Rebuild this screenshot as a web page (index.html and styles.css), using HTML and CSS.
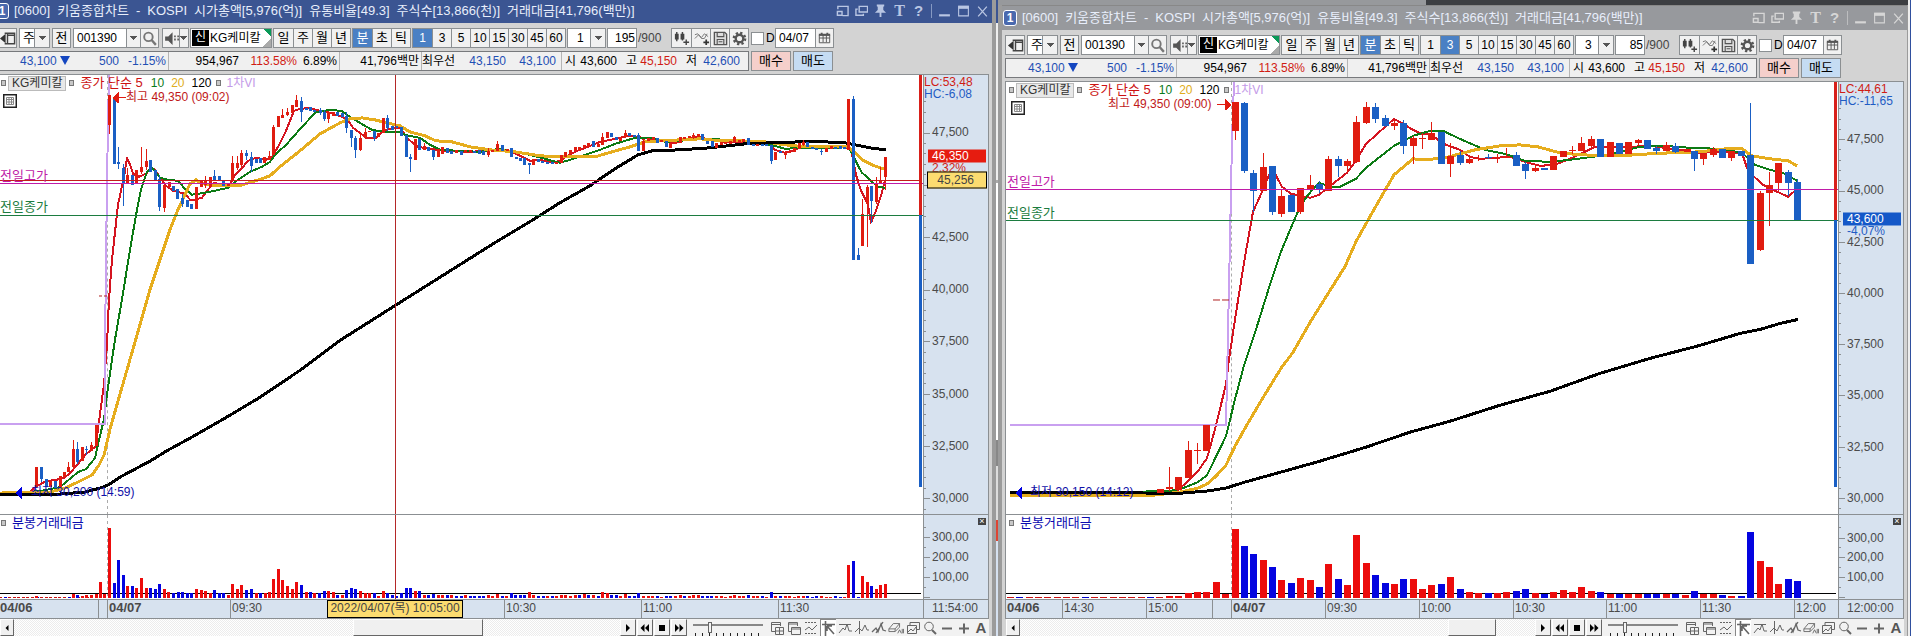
FILE: index.html
```html
<!DOCTYPE html>
<html lang="ko">
<head>
<meta charset="utf-8">
<title>키움종합차트</title>
<link rel="stylesheet" href="styles.css">
</head>
<body>
<svg class="defs" aria-hidden="true">
  <symbol id="i-restore" viewBox="0 0 14 12"><path d="M2 4V1h11v10H7M1.500 6.500h5v4h-5z" fill="none" stroke="currentColor" stroke-width="1.500"/></symbol>
  <symbol id="i-cascade" viewBox="0 0 14 12"><path d="M4.500 1h9v6h-9zM3 4H1v6.500h8V9" fill="none" stroke="currentColor" stroke-width="1.500"/></symbol>
  <symbol id="i-pin" viewBox="0 0 14 14"><path d="M3 0h8v2l-1 .5V6l3 3H8v4.500H6V9H1l3-3V2.500L3 2z" fill="currentColor"/></symbol>
  <symbol id="i-min" viewBox="0 0 12 12"><path d="M1 9h10v2H1z" fill="currentColor"/></symbol>
  <symbol id="i-max" viewBox="0 0 12 12"><path d="M1.500 2v8.500h9V2z" fill="none" stroke="currentColor"/><path d="M1 1h10v3H1z" fill="currentColor"/></symbol>
  <symbol id="i-x" viewBox="0 0 12 12"><path d="M2 2l8 9M10 2l-8 9" stroke="currentColor" stroke-width="1.200"/></symbol>
  <symbol id="i-panel" viewBox="0 0 18 18"><path d="M6 3.500h10.500v11H6M9 3.500v11M9 5.500h7" fill="none" stroke="#444" stroke-width="1.500"/><path d="M1 9l6-5v10z" fill="#333"/></symbol>
  <symbol id="i-search" viewBox="0 0 16 16"><circle cx="7" cy="6.500" r="4" fill="none" stroke="#777" stroke-width="1.800"/><path d="M10 9.500l4 4.500" stroke="#777" stroke-width="2.200"/></symbol>
  <symbol id="i-sound" viewBox="0 0 16 16"><path d="M2 6h3l4-4v12L5 10H2z" fill="#555"/><path d="M10.500 6h1.500M13.500 6H15M10.500 9h1.500M13.500 9H15" stroke="#555" stroke-width="1.800"/></symbol>
  <symbol id="i-candle" viewBox="0 0 18 18"><path d="M2 4h4v6H2zM8 4h4v6H8z" fill="#444"/><path d="M4 2v10M10 2v9M11 13h6M14 10v6" stroke="#444" stroke-width="1.500"/></symbol>
  <symbol id="i-wave" viewBox="0 0 18 18"><path d="M2 9l4-4 3 3 3-4 4 3M2 5l3-1 4 5 3 0 3-5" fill="none" stroke="#777"/><path d="M11 13h6M14 10v6" stroke="#333" stroke-width="1.800"/></symbol>
  <symbol id="i-save" viewBox="0 0 18 18"><path d="M2.500 2.500h11l2 2v11h-13z" fill="#ddd" stroke="#555" stroke-width="1.400"/><path d="M5.500 3v4h7V3M5.500 15v-5h7v5M7 12.500h4" fill="none" stroke="#555" stroke-width="1.200"/></symbol>
  <symbol id="i-gear" viewBox="0 0 18 18"><circle cx="9" cy="9" r="6" fill="none" stroke="#555" stroke-width="2.500" stroke-dasharray="2.400 2.310"/><circle cx="9" cy="9" r="4" fill="none" stroke="#555" stroke-width="2.500"/></symbol>
  <symbol id="i-cal" viewBox="0 0 18 18"><path d="M3.500 5.500h11v8h-11zM3.500 8.500h11M7.500 5v8M11 5v8" fill="none" stroke="#555"/><path d="M3 4h12v2H3zM5 3h2v2H5zM11 3h2v2h-2z" fill="#555"/></symbol>
  <symbol id="i-grid" viewBox="0 0 14 14"><rect x=".75" y=".75" width="12.500" height="12.500" fill="#fff" stroke="#222" stroke-width="1.500"/><path d="M3.500 3.500h7v7h-7zM3.500 5.500h7M3.500 8h7M6 3.500v7M8.500 3.500v7" fill="none" stroke="#888"/></symbol>
  <symbol id="i-play" viewBox="0 0 16 16"><path d="M6 4l4 4-4 4z"/></symbol>
  <symbol id="i-prev" viewBox="0 0 16 16"><path d="M7.500 4v8l-4-4zM12 4v8L8 8z"/></symbol>
  <symbol id="i-next" viewBox="0 0 16 16"><path d="M4 4v8l4-4zM8.500 4v8l4-4z"/></symbol>
  <symbol id="i-stop" viewBox="0 0 16 16"><path d="M5 5h6v6H5z"/></symbol>
  <symbol id="i-left" viewBox="0 0 16 16"><path d="M10 4v8L6 8z"/></symbol>
  <symbol id="t-addwin" viewBox="0 0 16 16"><path d="M6 11.500H2.500v-9h9V6M2.500 4.500h9M6.500 7.500h8v7h-8zM10.500 7.500v7M6.500 11h8"/></symbol>
  <symbol id="t-wins" viewBox="0 0 16 16"><path d="M5 11.500H2.500v-9h9V6M2.500 4h9M5.500 7.500h9v7h-9zM5.500 9h9"/></symbol>
  <symbol id="t-range" viewBox="0 0 16 16"><path d="M2 2.500h12M2 13.500h12" stroke-dasharray="2 1"/><path d="M2 10l4-3 3 3 5-5"/></symbol>
  <symbol id="t-cursor" viewBox="0 0 16 16"><path d="M2 4.500h13M5.500 1v15M7 6l7 8M7 6v5M7 6h5" stroke-width="1.600"/></symbol>
  <symbol id="t-peak" viewBox="0 0 16 16"><path d="M2 4.500h12M2 13l4-5 2 2 2-6 2 7h3"/></symbol>
  <symbol id="t-vert" viewBox="0 0 16 16"><path d="M5.500 1v13M1 12l4-4 3 3 3-6 2 5 2 0"/></symbol>
  <symbol id="t-trend" viewBox="0 0 16 16"><path d="M1 12l4-4 2 4 3-8 2 6 3 1M5 13L12 2" stroke-width="1.300"/></symbol>
  <symbol id="t-erase" viewBox="0 0 18 16"><path d="M1 9l5-6h7l-5 6zM1 9v3h7V9M8 12l5-5V3M11 14l2-4 2 4M16 9v5M17.500 9v5"/></symbol>
  <symbol id="t-copy" viewBox="0 0 16 16"><path d="M5 5V2.500h9.500v7H12M2.500 5.500h9v8h-9zM3 12l3-3 2 2 3-4"/></symbol>
  <symbol id="t-zoom" viewBox="0 0 16 16"><circle cx="7" cy="6.500" r="4.300"/><path d="M10 10l4 4" stroke-width="2"/></symbol>
  <symbol id="t-minus" viewBox="0 0 16 16"><path d="M3 8.500h10" stroke-width="2"/></symbol>
  <symbol id="t-plus" viewBox="0 0 16 16"><path d="M3 8.500h10M8 3.500v10" stroke-width="2"/></symbol>
</svg>

<main class="desktop">
  <div class="pane pane-left" id="left"></div>
  <div class="seam"></div>
  <div class="pane pane-right" id="right"></div>
  <div class="edge"></div>
</main>

<template id="window">
  <section class="window">
    <header class="titlebar">
      <b class="badge">1</b>
      <h1 class="title"><span>[0600]</span><span>키움종합차트</span><span>-</span><span>KOSPI</span><span>시가총액[5,976(억)]</span><span>유통비율[49.3]</span><span>주식수[13,866(천)]</span><span>거래대금[41,796(백만)]</span></h1>
      <div class="caption">
        <button aria-label="복원"><svg><use href="#i-restore"/></svg></button>
        <button aria-label="겹치기"><svg><use href="#i-cascade"/></svg></button>
        <button aria-label="고정"><svg><use href="#i-pin"/></svg></button>
        <button class="serif">T</button>
        <button class="help">?</button>
        <i class="bar"></i>
        <button aria-label="최소화"><svg><use href="#i-min"/></svg></button>
        <button aria-label="최대화"><svg><use href="#i-max"/></svg></button>
        <button aria-label="닫기"><svg><use href="#i-x"/></svg></button>
      </div>
    </header>
    <div class="toolbar">
      <button class="btn sq" aria-label="패널"><svg><use href="#i-panel"/></svg></button>
      <label class="combo kind"><select aria-label="종류"><option>주</option></select></label>
      <button class="btn">전</button>
      <div class="group code"><input value="001390" aria-label="종목코드"><button class="drop" aria-label="목록"></button><button aria-label="검색"><svg><use href="#i-search"/></svg></button></div>
      <div class="group sound"><button aria-label="소리"><svg><use href="#i-sound"/></svg></button><button class="drop" aria-label="소리 설정"></button></div>
      <div class="stock"><b>신</b><span>KG케미칼</span></div>
      <div class="group cells"><button>일</button><button>주</button><button>월</button><button>년</button></div>
      <div class="group cells"><button class="on">분</button><button>초</button><button>틱</button></div>
      <div class="group cells minutes"><button>1</button><button>3</button><button>5</button><button>10</button><button>15</button><button>30</button><button>45</button><button>60</button></div>
      <label class="combo step"><select aria-label="분 단위"><option></option></select></label>
      <input class="count" aria-label="봉 개수"><span class="total">/900</span>
      <div class="group cells tools"><button aria-label="봉 추가"><svg><use href="#i-candle"/></svg></button><button aria-label="지표 추가"><svg><use href="#i-wave"/></svg></button><button aria-label="저장"><svg><use href="#i-save"/></svg></button><button aria-label="설정"><svg><use href="#i-gear"/></svg></button></div>
      <label class="day"><input type="checkbox">D</label>
      <div class="group date"><input value="04/07" aria-label="날짜"><button aria-label="달력"><svg><use href="#i-cal"/></svg></button></div>
    </div>
    <div class="quote">
      <div class="figures">
        <span class="dn">43,100 <i class="tri"></i></span><span class="dn">500</span><span class="dn end">-1.15%</span>
        <span>954,967</span><span class="up">113.58%</span><span class="end">6.89%</span>
        <span class="end">41,796백만</span>
        <span class="word">최우선</span><span class="dn">43,150</span><span class="dn end last">43,100</span>
        <span class="word">시</span><span>43,600</span><span class="word">고</span><span class="up">45,150</span><span class="word">저</span><span class="dn">42,600</span>
      </div>
      <button class="buy">매수</button><button class="sell">매도</button>
    </div>
    <div class="chart">
      <div class="plot price">
        <svg class="canvas" preserveAspectRatio="none"></svg>
        <div class="legend"><i class="knob"></i><span class="name">KG케미칼</span><i class="knob"></i><span class="ma5">종가 단순 5</span><span class="ma10">10</span><span class="ma20">20</span><span class="ma120">120</span><i class="knob"></i><span class="vi">1차VI</span></div>
        <button class="gridbtn" aria-label="표"><svg><use href="#i-grid"/></svg></button>
      </div>
      <div class="axis price-axis"><svg class="ticks" preserveAspectRatio="none"></svg><p class="lc"></p><p class="hc"></p></div>
      <div class="plot volume">
        <svg class="canvas" preserveAspectRatio="none"></svg>
        <div class="legend"><i class="knob"></i><span class="vol">분봉거래대금</span></div>
      </div>
      <div class="axis volume-axis"><svg class="ticks" preserveAspectRatio="none"></svg><button class="close" aria-label="닫기">×</button></div>
      <div class="times"></div>
      <div class="axis clock"></div>
    </div>
    <footer class="bottom">
      <div class="scroll"><button class="raised" aria-label="왼쪽"><svg><use href="#i-left"/></svg></button><i class="before"></i><i class="thumb raised"></i><i class="after"></i></div>
      <div class="nav"><button class="raised" aria-label="재생"><svg><use href="#i-play"/></svg></button><button class="raised" aria-label="뒤로"><svg><use href="#i-prev"/></svg></button><button class="raised" aria-label="정지"><svg><use href="#i-stop"/></svg></button><button class="raised" aria-label="앞으로"><svg><use href="#i-next"/></svg></button></div>
      <div class="speed"><input type="range" min="0" max="9" value="2" aria-label="속도"></div>
      <div class="draw"></div>
    </footer>
  </section>
</template>
<script src="app.js"></script>
</body>
</html>
```
FILE: styles.css
```css
:root {
  --ui: "Liberation Sans", "Noto Sans CJK KR", sans-serif;
  --line: #8b8f92;
  --up: #d01c14;
  --down: #1f4fb4;
}
* { box-sizing: border-box; }
body { margin: 0; height: 100vh; overflow: hidden; background: #fff; font: 12px/14px var(--ui); color: #000; }
button, input, select { font: inherit; color: inherit; margin: 0; padding: 0; border: 0; border-radius: 0; background: none; }
i { font-style: normal; }
p { margin: 0; }
.defs { position: absolute; width: 0; height: 0; }

.desktop { display: flex; height: 100vh; }
.pane { min-width: 0; display: flex; }
.pane-left { flex: 996 1 0; }
.pane-right { flex: 910 1 0; padding-top: 5px; background: linear-gradient(90deg, #97999c 47%, #3c3e42 47%); }
.seam { flex: 0 0 2px; background: linear-gradient(#3c5592 0 23px, #eee 23px 180px, #aaa 180px 183px, #fff 183px 440px, #888 440px 466px, #dcdcdc 466px 520px, #d43 520px 541px, #d6e1f0 541px); }
.edge { flex: 0 0 3px; border-right: 1px solid #2f4f9e; background: #eee; }

.window { flex: 1; min-width: 0; display: flex; flex-direction: column; overflow: hidden; background: #d3d3d3; border-right: 4px solid #9b9b9b; }
.pane-right .window { border-right: 1px solid #9b9b9b; border-left: 4px solid #9b9b9b; }

.titlebar { flex: none; height: 23px; display: flex; align-items: center; gap: 5px; color: #e8eefb; background: #3b5592; margin-right: -4px; padding-right: 7px; }
.pane-right .titlebar { height: 25px; background: #97999d; margin: 0 -1px 0 -4px; padding: 0 3px 0 5px; border-top: 1px solid #888; }
.pane-left .titlebar { margin-left: -5px; padding-bottom: 2px; }
.badge { width: 14px; height: 16px; border: 1px solid #fff; border-radius: 3px; background: #4a69ae; text-align: center; font-size: 12px; line-height: 14px; color: #fff; }
.title { margin: 0; display: flex; gap: 7px; font: 400 13px/18px var(--ui); white-space: nowrap; }
.caption { margin-left: auto; display: flex; align-items: center; gap: 6px; color: #b9c6e3; }
.pane-right .caption { color: #d6d6d6; }
.caption button { width: 13px; height: 14px; }
.caption svg { display: block; width: 13px; height: 14px; }
.caption .serif { font: 700 16px/14px "Liberation Serif", serif; }
.caption .help { font: 700 15px/14px var(--ui); }
.bar { width: 1px; height: 14px; background: currentColor; opacity: .6; }

.toolbar { flex: none; display: flex; align-items: center; height: 20px; margin: 5px 0 3px; white-space: nowrap; }
.pane-left .toolbar, .pane-left .quote { margin-left: -3px; }
.pane-right .toolbar, .pane-right .quote { margin-left: 3px; }
.toolbar > * { flex: none; height: 20px; }
.toolbar svg { display: block; width: 17px; height: 17px; margin: auto; }
.btn, .group, .combo, .stock, .count { border: 1px solid var(--line); background: #f1f1f1; }
.btn { width: 19px; margin-right: 2px; font-size: 13px; }
.btn.sq { width: 20px; }
.group { display: flex; margin-right: 1px; }
.group button { min-width: 0; border-left: 1px solid var(--line); }
.group button:first-child { border-left: 0; }
.group input { min-width: 0; background: #fff; padding-left: 3px; }
.combo { position: relative; display: block; margin-right: 2px; background: #fff; }
.combo select { appearance: none; width: 100%; height: 18px; padding-left: 3px; font: 13px/16px var(--ui); }
.combo.kind { width: 31px; }
.combo.step { width: 39px; margin-right: 1px; }
.combo.step select { padding-left: 9px; font-size: 12px; }
.combo::after { content: ""; position: absolute; right: 0; top: 0; width: 14px; height: 18px; border-left: 1px solid var(--line); pointer-events: none; }
.combo::after, .group .drop { background: linear-gradient(#555, #555) 50% 7px / 7px 1px no-repeat, linear-gradient(#555, #555) 50% 8px / 5px 1px no-repeat, linear-gradient(#555, #555) 50% 9px / 3px 1px no-repeat, linear-gradient(#555, #555) 50% 10px / 1px 1px no-repeat, #f1f1f1; }
.code { width: 86px; margin-right: 3px; }
.code input { flex: 1; width: 54px; }
.code .drop { width: 14px; }
.sound { width: 27px; }
.sound .drop { width: 10px; }
.stock { width: 82px; margin-right: 1px; display: flex; align-items: center; background: linear-gradient(45deg, transparent 50%, #0a9a58 50%) 100% 0 / 8px 8px no-repeat, linear-gradient(135deg, transparent 50%, #aaa 50%) 100% 100% / 8px 8px no-repeat, #fff; }
.stock b { width: 17px; height: 16px; margin: 0 1px; background: #000; color: #fff; font-weight: 400; text-align: center; line-height: 15px; }
.cells button { width: 19px; font-size: 13px; }
.minutes button { font-size: 12px; }
.cells .on { background: #4a80c4; color: #fff; }
.count { width: 30px; background: #fff; text-align: right; padding-right: 1px; }
.total { width: 34px; padding-left: 1px; line-height: 20px; color: #444; }
.tools { margin-right: 2px; }
.day { display: flex; align-items: center; gap: 2px; width: 24px; }
.day input { appearance: none; width: 13px; height: 13px; border: 1px solid var(--line); background: #fff; }
.date { width: 59px; }
.date input { width: 39px; }
.date button { flex: 1; }

.quote { flex: none; display: flex; gap: 2px; height: 20px; margin-bottom: 3px; white-space: nowrap; }
.figures { display: grid; grid-template-columns: 72px 49px 50px 70px 58px 43px 82px 30px 54px 56px 14px 41px 20px 40px 20px 51px; border: 1px solid #77797c; background: #f0f0f0; text-align: right; line-height: 18px; }
.figures .dn { color: var(--down); }
.figures .up { color: var(--up); }
.figures .end { border-right: 1px solid #b5b5b5; padding-right: 2px; }
.figures .last { padding-right: 5px; }
.figures > :last-child { padding-right: 8px; }
.tri { display: inline-block; border: 5px solid transparent; border-top: 9px solid #1446c0; border-bottom: 0; }
.quote button { width: 40px; border: 1px solid var(--line); font-size: 13px; }
.buy { background: #f5cfcb; }
.sell { background: #c5dcf3; }

.chart { flex: 1; min-height: 0; display: grid; grid-template: minmax(0, 1fr) 85px 18px / minmax(0, 1fr) 65px; border: 1px solid var(--line); margin-right: 3px; background: #fff; }
.pane-left .chart { border-left: 0; }
.pane-right .chart { margin-left: 3px; }
.plot, .axis, .times { position: relative; overflow: hidden; }
.axis { background: #d7e2ef; border-left: 1px solid var(--line); color: #4a4a4a; }
.price, .price-axis, .volume, .volume-axis { border-bottom: 1px solid var(--line); }
.canvas, .ticks { position: absolute; inset: 0; width: 100%; height: 100%; shape-rendering: crispEdges; }
.legend { position: relative; display: flex; align-items: center; height: 14px; margin: 1px 0 0; padding-left: 1px; font: 13px/14px var(--ui); white-space: nowrap; }
.pane-right .legend { padding-left: 3px; }
.knob { width: 5px; height: 6px; border: 1px solid #777; background: #c8c8c8; }
.name { margin: 0 3px 0 2px; padding: 0 3px; background: #e8e8e8; border: 1px solid #bbb; font-size: 12px; line-height: 13px; color: #333; }
.ma5 { margin-left: 6px; color: #cc1111; }
.ma10 { margin-left: 8px; color: #0a7a1a; }
.ma20 { margin-left: 7px; color: #e0ad20; }
.ma120 { margin: 0 4px 0 7px; }
.ma10, .ma20, .ma120, .vi { font-size: 12px; }
.vi { margin-left: 6px; color: #c39ae8; }
.vol { margin-left: 6px; color: #0a0ab0; }
.gridbtn { position: relative; display: block; width: 14px; height: 14px; margin: 4px 0 0 3px; }
.pane-right .gridbtn { margin-left: 5px; }
.gridbtn svg { display: block; width: 14px; height: 14px; }
.note { position: absolute; transform: translateY(-50%); line-height: 14px; white-space: nowrap; }
.note.level { font-size: 13px; }
.axis .label { position: absolute; left: 8px; transform: translateY(-50%); }
.lc { position: relative; color: var(--up); line-height: 14px; }
.hc { position: relative; color: #1f5cc4; line-height: 12px; margin-top: -1px; }
.tag { position: absolute; left: 4px; width: 58px; height: 13px; padding-left: 4px; transform: translateY(-50%); color: #fff; line-height: 13px; }
.rate { position: absolute; left: 8px; transform: translateY(-50%); line-height: 11px; }
.cross { position: absolute; border: 1px solid #000; background: #fcdc70; color: #444; white-space: nowrap; }
.axis .cross { left: 3px; width: 60px; height: 17px; padding-right: 12px; transform: translateY(-50%); text-align: right; line-height: 14px; }
.close { position: absolute; right: 2px; top: 3px; width: 8px; height: 7px; background: #444; color: #fff; font-size: 9px; line-height: 7px; }
.times { background: #d7e2ef; color: #4a4a4a; line-height: 16px; }
.times span { position: absolute; top: 0; height: 18px; padding-left: 1px; border-left: 1px solid var(--line); }
.times .bold { font-size: 13px; font-weight: 700; }
.times .first { border: 0; padding: 0; }
.times .cross { padding: 0; text-align: center; border: 1px solid #000; line-height: 15px; }
.clock { padding-left: 8px; line-height: 16px; }

.bottom { flex: none; height: 17px; display: flex; background: #f2f2f2; overflow: hidden; }
.pane-right .bottom { margin-left: 4px; }
.pane-right .bottom, .pane-left .bottom { margin-right: 3px; }
.raised { background: #f0f0f0; border: 1px solid #fff; border-right: 1px solid #666; border-bottom: 1px solid #666; }
.bottom svg { display: block; width: 16px; height: 16px; }
.scroll { flex: 1; display: flex; background: repeating-conic-gradient(#ececec 0 25%, #fff 0 50%) 0 0 / 2px 2px; }
.scroll button { width: 14px; display: flex; justify-content: center; }
.scroll i { display: block; }
.nav { display: flex; gap: 1px; }
.nav button { width: 16px; }
.nav svg { margin-left: -1px; }
.speed { width: 82px; padding: 3px 6px 0; }
.speed input { appearance: none; display: block; width: 70px; height: 14px; background: linear-gradient(#888, #888) 0 2px / 100% 2px no-repeat, repeating-linear-gradient(90deg, #222 0 1px, transparent 1px 7px) 2px 11px / 100% 3px no-repeat; }
.speed input::-webkit-slider-thumb { appearance: none; width: 4px; height: 11px; margin-top: -3px; background: #f4f4f4; border: 1px solid #666; }
.draw { display: flex; gap: 1px; }
.draw button { width: 16px; height: 17px; }
.draw svg { fill: none; stroke: #666; }
.draw .on { background: #fff; box-shadow: inset 1px 1px #888; }
.draw .letter { font: 700 15px/16px var(--ui); color: #555; }
```
FILE: app.js
```js
const RED = '#e01c10', BLUE = '#1a5fc4';

// Each candle: x, kind (r/b), body top, body bottom, wick top, wick bottom.
const LEFT = {
  side: 'left', minute: 0, step: '1', count: '195',
  width: 923, top: 75, bottom: 515, bodyWidth: 3,
  lc: 'LC:53,48', hc: 'HC:-6,08',
  scale: { y0: 499.3, per: 52.4 },
  candles: `36 r 468 487;41 b 468 480 468 483;46 b 480 488;50 r 482 488;55 b 482 489;60 r 477 488;64 r 473 478;68 r 468 473 463 473;73 r 450 468 441 470;77 b 450 463 443 465;82 r 448 462;86 b 450 451 447 456;91 r 446 452 443 452;96 r 426 447;109 r 95 125 95 134;114 b 97 164;118 b 162 164 147 169;123 b 168 184 164 206;127 r 175 184 168 184;132 b 175 185;136 r 170 184;141 r 167 172 147 174;146 r 161 167 149 170;150 b 160 172;155 b 170 180;159 b 179 207 175 211;164 r 185 208 185 212;169 r 182 187;173 b 186 191;177 b 189 199;182 b 198 204 194 207;187 b 200 207;191 b 204 209;196 r 187 209;201 r 181 187;205 r 180 185 176 188;210 r 177 187;214 b 176 180 170 181;219 b 176 180;223 b 181 186;228 r 183 186;232 r 163 180 156 182;237 r 163 168 156 170;241 r 153 165 150 168;246 b 153 156 150 160;251 b 157 166 152 172;256 b 159 163;260 b 158 163;264 r 157 163;269 r 156 160 151 160;273 r 127 155 125 155;278 r 116 127;282 r 115 118 109 118;287 r 112 115 108 116;292 r 105 113;296 r 100 107 95 107;301 b 101 112 97 122;306 b 108 110;310 b 107 111;314 b 110 112;320 b 110 113 108 115;324 b 112 119 110 121;328 r 112 119 111 123;333 r 112 116;337 b 112 116;342 b 113 117;346 b 116 128 112 133;351 b 130 138 130 147;355 b 138 150 136 158;360 r 138 150 133 151;365 r 132 138 128 138;369 r 131 132;374 b 131 138 131 141;378 r 133 137;383 r 118 133;387 b 118 128 115 131;392 b 126 130;396 b 126 128;401 b 127 136;406 b 135 157;410 b 157 159 154 172;415 r 139 160;419 b 139 150;424 r 146 150 143 150;428 b 147 151;433 b 150 157 150 160;438 r 149 157;442 r 147 154;447 b 148 153;451 b 151 154;456 r 150 153;461 b 151 155;465 r 150 153;470 r 150 152;474 b 151 153;479 b 150 154;483 b 151 155;488 r 151 155 148 157;492 r 150 152;497 r 144 151 141 151;502 b 145 151;507 r 149 151;511 b 148 157;516 b 157 159;520 b 158 161;524 b 158 165;529 b 163 165 163 174;533 r 159 165;538 b 159 162;542 b 161 163;547 b 162 164;552 b 162 164;556 r 162 164;561 r 155 163;565 r 152 157;570 r 150 154;575 r 147 151;579 r 147 150;584 r 145 148;588 r 143 147;593 b 141 147;598 r 144 147;602 r 137 145 133 145;607 r 132 138;611 b 133 137;616 b 137 140;620 r 137 141;625 r 133 137 130 138;629 b 133 136;634 b 135 137;638 b 135 151 133 151;643 r 141 151;648 r 138 141;653 r 137 140;657 b 138 143;661 r 140 142;666 b 141 147;670 r 143 148;675 r 142 144;680 r 137 143;684 r 137 139;689 r 136 138;693 r 135 138 133 139;698 r 134 137;702 b 134 140;707 b 141 144;712 b 141 147;716 r 143 148;721 r 142 145;725 r 142 144;730 r 141 144;734 r 137 142 136 142;739 r 140 142;743 r 139 142;748 b 138 145;753 b 144 146;757 r 144 146;762 b 144 146;766 b 144 146;771 b 145 161 145 164;775 r 152 160;780 b 151 153;785 r 153 155 151 159;789 r 151 153;794 r 148 152;799 r 143 149;803 r 142 145 140 146;807 b 142 147;812 b 147 149;816 b 148 150;821 b 151 152 149 155;826 r 148 152;831 r 146 149;835 b 147 149;840 b 146 149;844 b 147 149;848 r 99 150;853 b 99 260 96 260;858 b 255 260 248 260;862 r 214 246 199 246;867 r 187 204 185 247;871 b 186 201 186 223;876 r 184 202 177 204;880 r 180 184 167 184;885 r 157 177 157 190`,
  lines: [
    ['#d41420', 2, '28,494 37,487 46,482 55,481 64,479 70,474 77,466 86,455 96,447 98,430 104,385 107,345 109,300 112,260 118,205 124,177 127,158 130,165 133,174 139,177 146,174 151,168 155,170 160,178 166,186 173,191 185,194 190,200 195,200 202,198 208,190 214,183 222,185 230,184 236,174 243,167 248,161 256,158 266,160 272,157 278,147 286,131 294,111 300,109 310,108 320,111 330,113 340,116 348,120 353,128 360,133 366,138 376,138 382,132 390,129 400,128 409,140 418,147 430,149 445,151 470,152 500,150 510,151 520,156 530,161 540,160 552,163 560,161 566,157 577,151 588,147 600,142 615,139 628,136 640,137 645,141 655,139 665,142 675,143 690,138 700,137 712,141 725,142 740,142 755,143 768,143 775,150 785,153 795,150 805,146 818,147 835,148 845,147 851,150 856,175 861,191 865,199 868,205 871,223 876,211 881,196 885,180'],
    ['#0c7a14', 2, '0,495 40,492 60,488 66,483 78,473 86,470 95,459 98,445 104,420 107,395 115,340 122,300 130,250 137,210 141,190 147,172 152,168 160,178 168,180 178,181 184,188 192,195 205,193 215,191 228,188 238,180 250,172 262,167 270,162 276,154 286,145 294,136 302,127 316,112 330,110 342,111 350,117 360,123 372,130 385,132 400,132 405,135 420,138 430,145 440,150 460,151 480,152 500,149 515,152 530,155 545,159 560,163 570,160 585,155 600,150 615,144 635,138 650,138 665,142 680,141 700,139 730,140 745,141 760,144 775,146 785,149 800,148 835,148 848,147 853,155 858,166 862,173 868,178 873,183 878,187 885,188'],
    ['#e6ad1e', 3, '0,494 50,493 65,489 80,482 92,476 99,466 104,456 110,430 118,402 130,360 140,325 150,290 160,260 170,230 178,210 184,197 190,184 196,180 202,184 215,186 240,186 252,182 262,179 270,176 280,167 300,151 320,134 340,123 350,119 362,118 375,120 400,126 410,132 425,136 436,141 452,142 470,147 490,150 515,152 540,156 560,157 595,157 612,152 630,147 645,142 660,141 680,140 700,139 720,141 740,141 765,142 785,145 805,147 848,147 855,153 862,160 872,165 880,168 885,169'],
    ['#000', 3, '0,495 60,495 85,493 100,489 108,486 120,478 150,462 168,451 190,439 230,416 260,398 300,371 340,341 370,322 400,303 430,284 468,260 495,243 530,222 560,203 590,186 615,169 638,155 652,151 680,150 710,148 745,144 770,143 800,142 825,142 845,143 855,145 870,148 886,150'],
    ['#c9a0f0', 2, '0,425 105,425 105,345 106,265 107,180 109,75']
  ],
  levels: [['#c01ca8', 183, '전일고가', 176], ['#1c7c40', 215, '전일종가', 207]],
  dash: [99, 107, 296], divider: 107,
  high: { text: '최고 49,350 (09:02)', x: 126, y: 97, path: 'M112 98l7-6v12zM118 97.500h8v1h-8z' },
  low: { text: '최저 30,200 (14:59)', x: 31, y: 493, path: 'M15 494l7-6v12z' },
  edge: [919, 215], cross: { x: 395, y: 180 },
  volumes: `0-96 1;36 r 2;73 r 4;77 b 3;82 r 2;86 r 3;91 r 3;96 r 4;100 r 16;104 r 4;109 r 70;114 b 15;118 b 38;123 b 23;127 r 12;132 b 12;136 r 10;141 r 20;146 r 10;150 b 10;155 b 9;159 b 14;164 r 9;168 r 6;173 b 5;178 b 6;182 b 6;187 b 5;191 b 5;196 r 9;201 r 8;205 r 7;210 r 5;214 b 8;219 b 5;223 b 5;228 r 3;232 r 14;237 r 9;241 r 13;246 b 8;251 b 9;256 r 5;260 b 5;265 r 5;269 r 6;273 r 19;278 r 29;282 r 18;287 r 12;292 r 9;296 r 16;301 b 13;306 r 6;310 b 6;314 r 5;319 b 5;324 b 7;328 r 7;333 r 6;337 b 3;342 r 3;346 b 8;351 b 10;355 b 9;360 r 7;365 r 5;369 r 5;374 b 5;378 r 2;383 r 7;387 b 5;392 b 3;396 b 2;401 b 5;406 b 10;410 b 10;415 r 7;419 b 7;424 r 3;428 b 3;433 b 4;438 r 3;442 r 3;447 b 3;451 r 3;456 b 2;461 b 2;465 r 3;470 b 2;474 b 2;479 b 2;483 b 2;488 r 3;492 r 2;497 r 4;502 b 2;506 r 2;511 b 5;515 b 3;520 b 3;524 b 3;529 r 6;533 r 3;538 b 2;543 b 2;547 r 2;552 b 2;556 r 2;561 r 3;565 r 3;570 r 2;575 r 3;579 b 3;584 r 4;588 b 3;593 r 3;598 b 2;602 r 6;607 r 5;611 b 3;616 b 3;620 r 2;625 r 4;629 b 2;634 b 2;638 b 5;643 r 2;648 r 2;652 r 2;657 b 2;661 r 1;666 b 2;670 b 2;675 r 2;680 r 3;684 b 2;689 r 2;693 r 3;698 r 3;702 b 2;707 b 2;711 b 2;716 r 2;721 r 2;725 r 1;730 r 2;734 r 3;739 r 2;743 r 2;748 b 3;753 r 2;757 r 2;762 b 2;766 r 1;771 b 6;775 r 2;780 b 2;785 r 2;789 r 2;794 r 1;798 r 2;803 r 2;807 b 2;812 b 1;816 b 2;821 r 2;826 r 1;830 r 1;835 b 2;840 b 1;844 r 1;848 r 33;853 b 37;858 b 1;862 r 22;867 r 16;871 b 12;876 r 9;880 r 13;885 r 14`,
  times: [[0, '04/06', 'bold first'], [98, ''], [107, '04/07', 'bold'], [230, '09:30'], [504, '10:30'], [641, '11:00'], [778, '11:30']],
  clock: '11:54:00', thumb: [339, 130],
  tag: { y: 156, text: '46,350', color: '#e61c10' }, rate: { y: 168, text: '2,32%', color: '#d01c14' },
  volTicks: [538, 558, 578]
};

const RIGHT = {
  side: 'right', minute: 1, step: '3', count: '85',
  width: 832, origin: 1006, top: 82, bottom: 515, bodyWidth: 7,
  lc: 'LC:44,61', hc: 'HC:-11,65',
  scale: { y0: 499, per: 51.4 },
  candles: `1160 r 490 494;1169 r 488 490 468 492;1178 r 478 491;1188 r 451 479 442 479;1197 r 451 452 444 465;1206 r 426 452;1235 r 102 131 102 140;1244 b 103 171 102 173;1253 b 173 191 170 212;1263 r 167 191 153 191;1272 b 166 212 166 215;1281 r 196 214 189 217;1291 b 195 212;1300 r 188 212 188 214;1310 r 185 189 175 189;1319 b 184 189 181 193;1328 r 159 191 156 191;1338 b 159 166 156 177;1347 r 161 166 159 172;1356 r 122 162 116 163;1366 r 107 123 102 124;1375 b 107 119 103 123;1385 b 118 126 115 127;1394 r 123 126 120 130;1403 b 123 146 120 154;1413 r 138 146 136 164;1422 r 138 139 133 149;1431 r 133 140 122 140;1441 b 132 164;1450 r 156 164 143 177;1460 b 155 163 151 165;1469 r 159 163 157 164;1478 r 158 159 155 161;1488 b 157 158 154 159;1497 r 157 158 154 163;1506 r 156 158 148 158;1516 b 155 166 152 166;1525 b 164 171 162 179;1535 r 168 171 164 172;1544 b 168 170;1553 r 156 170;1563 r 151 157;1572 r 150 151 146 154;1581 r 143 151 137 151;1591 r 139 146 136 147;1600 b 139 157;1610 r 142 157;1619 b 143 154;1628 r 142 154;1638 r 140 143 139 145;1647 b 140 149;1656 b 148 151 146 154;1666 r 145 151 142 151;1675 b 146 152 143 153;1687 r 149 152;1694 b 151 159 151 171;1703 r 154 159 154 165;1713 r 149 155 147 157;1722 b 149 158;1731 r 151 158 151 161;1741 b 151 156;1750 b 155 264 103 264;1760 r 193 250 191 251;1769 r 185 193 172 226;1778 r 163 183 163 191;1788 b 172 183 170 196;1797 b 182 220 179 220`,
  lines: [
    ['#d41420', 2, '1150,494 1178,491 1188,482 1198,472 1207,459 1215,430 1226,385 1229,360 1235,320 1244,263 1253,212 1263,190 1269,175 1275,174 1282,187 1291,194 1300,196 1310,198 1319,195 1328,188 1338,180 1347,173 1356,161 1366,144 1375,136 1385,127 1394,119 1403,124 1413,130 1422,134 1431,134 1441,143 1460,150 1470,157 1480,159 1510,157 1525,162 1540,166 1555,165 1570,159 1585,152 1595,147 1610,147 1630,147 1650,146 1680,150 1700,153 1720,152 1742,153 1747,168 1753,176 1763,185 1775,191 1788,197 1795,191'],
    ['#0c7a14', 2, '1010,495 1170,492 1183,489 1198,483 1207,476 1226,437 1235,400 1244,366 1256,330 1270,285 1281,252 1291,228 1300,207 1306,198 1313,189 1319,183 1330,187 1340,187 1356,179 1366,168 1380,157 1394,146 1413,136 1430,131 1443,131 1460,139 1485,150 1505,154 1525,161 1550,162 1570,160 1600,156 1620,152 1640,147 1665,146 1690,148 1720,149 1742,153 1755,165 1770,170 1785,174 1797,181'],
    ['#e6ad1e', 3, '1010,496 1155,496 1180,493 1198,489 1207,485 1216,477 1226,466 1235,447 1245,429 1262,400 1281,369 1293,353 1310,323 1330,291 1345,267 1356,242 1375,208 1394,175 1413,159 1425,160 1445,158 1460,154 1475,150 1500,146 1520,145 1538,147 1560,153 1580,155 1620,156 1650,154 1670,153 1700,152 1725,149 1742,149 1752,156 1770,159 1788,161 1797,166'],
    ['#000', 3, '1010,493 1150,494 1183,494 1207,492 1226,489 1245,483 1281,473 1320,462 1366,448 1410,433 1450,422 1500,406 1550,392 1600,374 1650,359 1700,346 1740,334 1760,330 1780,324 1798,320'],
    ['#c9a0f0', 2, '1010,426 1226,426 1227,380 1230,240 1231,190 1232,140 1234,82']
  ],
  levels: [['#c01ca8', 189, '전일고가', 182], ['#1c7c40', 220, '전일종가', 213]],
  dash: [1213, 1229, 300], divider: 1231,
  high: { text: '최고 49,350 (09:00)', x: 1108, y: 104, path: 'M1232 105l-7-6v12zM1217 104.500h8v1h-8z' },
  low: { text: '최저 30,150 (14:12)', x: 1030, y: 493, path: 'M1015 494l7-6v12z' },
  edge: [1834, 220],
  volumes: `1010-1160 1;1169 r 2;1178 r 2;1188 r 5;1197 r 6;1206 r 6;1216 r 16;1225 r 4;1235 r 69;1244 b 52;1253 b 44;1263 r 38;1272 b 31;1281 r 18;1291 b 15;1300 r 20;1310 r 18;1319 b 11;1328 r 34;1338 b 19;1347 r 13;1356 r 63;1366 r 35;1375 b 23;1385 b 15;1394 r 14;1403 b 19;1413 r 19;1422 r 9;1431 r 13;1441 b 14;1450 r 21;1460 b 9;1469 r 6;1478 r 5;1488 b 5;1497 r 5;1506 r 6;1516 b 7;1525 b 9;1535 r 5;1544 b 4;1553 r 6;1563 r 8;1572 r 6;1581 r 11;1591 r 7;1600 b 6;1610 r 4;1619 b 4;1628 r 4;1638 r 4;1647 b 4;1656 b 4;1666 r 4;1675 b 4;1685 r 3;1694 b 7;1703 r 4;1713 r 4;1722 b 3;1731 r 2;1741 b 2;1750 b 66;1760 r 37;1769 r 31;1778 r 14;1788 b 19;1797 b 17`,
  times: [[1007, '04/06', 'bold first'], [1062, '14:30'], [1146, '15:00'], [1212, ''], [1231, '04/07', 'bold'], [1325, '09:30'], [1419, '10:00'], [1513, '10:30'], [1606, '11:00'], [1700, '11:30'], [1794, '12:00']],
  clock: '12:00:00', thumb: [428, 48],
  tag: { y: 219, text: '43,600', color: '#1458c8' }, rate: { y: 231, text: '-4,07%', color: '#1f5cc4' },
  volTicks: [539, 558, 578]
};

const DRAW = ['addwin', 'wins', 'range', 'cursor', 'peak', 'vert', 'trend', 'erase', 'copy', 'zoom', 'minus', 'plus'];
const rect = (x, y, w, h, f) => `<rect x="${x}" y="${y}" width="${w}" height="${h}" fill="${f}"/>`;

function build(c) {
  const root = document.getElementById('window').content.cloneNode(true);
  const $ = s => root.querySelector(s);
  const ox = c.origin || 0, height = c.bottom - c.top;
  const px = x => ((x - ox) / c.width * 100) + '%';
  const py = y => ((y - c.top) / height * 100) + '%';
  const add = (host, cls, text, style) => {
    const e = document.createElement('span');
    e.className = cls; e.textContent = text;
    Object.assign(e.style, style);
    host.append(e);
  };

  root.querySelectorAll('.minutes button')[c.minute].className = 'on';
  $('.step option').textContent = c.step;
  $('.count').setAttribute('value', c.count);
  $('.lc').textContent = c.lc;
  $('.hc').textContent = c.hc;
  $('.clock').textContent = c.clock;
  $('.before').style.width = c.thumb[0] + 'px';
  $('.thumb').style.width = c.thumb[1] + 'px';
  $('.draw').innerHTML = DRAW.map(n => `<button aria-label="${n}"${n === 'cursor' ? ' class="on"' : ''}><svg><use href="#t-${n}"/></svg></button>`).join('') + '<button class="letter">A</button>';

  // price panel
  const half = (c.bodyWidth - 1) / 2;
  let s = `<path d="M${c.divider + .5} ${c.top}V${c.bottom}" stroke="#aaa" stroke-dasharray="3 3"/>`;
  for (const [color, w, pts] of c.lines) s += `<polyline points="${pts}" fill="none" stroke="${color}" stroke-width="${w}" stroke-linejoin="round"/>`;
  for (const row of c.candles.split(';')) {
    const [x, k, t, b, wt = t, wb = b] = row.split(' ');
    const f = k === 'r' ? RED : BLUE;
    s += rect(x, wt, 1, wb - wt, f) + rect(x - half, t, c.bodyWidth, b - t, f);
  }
  const [d0, d1, dy] = c.dash;
  s += `<path d="M${d0} ${dy + .5}H${d1}" stroke="#b02020" stroke-dasharray="${(d1 - d0) / 2 - 1} 2"/>`;
  for (const [color, y] of c.levels) s += rect(ox, y, c.width, 1, color);
  s += rect(c.edge[0], c.top, 3, c.edge[1] - c.top, '#d8201a') + rect(c.edge[0], c.edge[1], 3, 488 - c.edge[1], BLUE);
  s += `<path d="${c.high.path}" fill="#e01c10"/><path d="${c.low.path}" fill="#0000e0"/>`;
  if (c.cross) s += rect(c.cross.x, c.top, 1, height, '#b42828') + rect(0, c.cross.y, 919, 1, '#c41c1c');
  const price = $('.price .canvas');
  price.setAttribute('viewBox', `${ox} ${c.top} ${c.width} ${height}`);
  price.innerHTML = s;
  const plot = $('.price');
  for (const [color, , text, y] of c.levels) add(plot, 'note level', text, { left: px(c.side === 'left' ? 0 : 1007), top: py(y), color });
  add(plot, 'note', c.high.text, { left: px(c.high.x), top: py(c.high.y), color: '#c01818' });
  add(plot, 'note', c.low.text, { left: px(c.low.x), top: py(c.low.y), color: '#1010a8' });

  // price axis
  const axis = $('.price-axis');
  let t = '';
  for (let k = -1; k < 40; k++) {
    const y = c.scale.y0 - k * c.scale.per / 5;
    if (y > c.top + 25) t += rect(0, Math.round(y), k % 5 ? 2 : 6, 1, '#8b8f92');
  }
  axis.querySelector('.ticks').innerHTML = t;
  axis.querySelector('.ticks').setAttribute('viewBox', `0 ${c.top} 64 ${height}`);
  for (let k = 0; k < 8; k++) {
    const y = c.scale.y0 - k * c.scale.per;
    // a price level under the crosshair box has no label of its own
    if (c.cross && Math.abs(y - c.cross.y) < 8) continue;
    add(axis, 'label', (30 + k * 2.5).toFixed(1).replace('.', ',') + '00', { top: py(y) });
  }
  add(axis, 'rate', c.rate.text, { top: py(c.rate.y), color: c.rate.color });
  add(axis, 'tag', c.tag.text, { top: py(c.tag.y), background: c.tag.color });
  if (c.cross) add(axis, 'cross', '45,256', { top: py(c.cross.y) });

  // volume panel
  const vw = c.bodyWidth, vh = Math.floor(vw / 2);
  let v = `<path d="M${c.divider + .5} 516V600" stroke="#aaa" stroke-dasharray="3 3"/>` + rect(ox, 594, c.width - 2, 1, '#000');
  for (const row of c.volumes.split(';')) {
    const [x, k, h] = row.split(' ');
    if (x.includes('-')) {
      const [a, b] = x.split('-').map(Number);
      for (let q = a, n = 0; q <= b; q += vw > 3 ? 9.33 : 4.57, n++) v += rect(Math.round(q) - vh, 598, vw, 1, n % 7 === 1 ? '#00c' : '#c81010');
    } else v += rect(x - vh, 599 - h, vw, h, k === 'r' ? '#ec0c0c' : '#0404e0');
  }
  if (c.cross) v += rect(c.cross.x, 516, 1, 84, '#b42828');
  const vol = $('.volume .canvas');
  vol.setAttribute('viewBox', `${ox} 516 ${c.width} 84`);
  vol.innerHTML = v;
  const va = $('.volume-axis');
  va.querySelector('.ticks').setAttribute('viewBox', '0 516 64 84');
  va.querySelector('.ticks').innerHTML = c.volTicks.map((y, i) => rect(0, y, 6, 1, '#8b8f92') + rect(0, 528 + i * 20, 2, 1, '#8b8f92')).join('') + rect(0, 588, 2, 1, '#8b8f92') + rect(0, 598, 6, 1, '#8b8f92');
  c.volTicks.forEach((y, i) => add(va, 'label', `${3 - i}00,00`, { top: ((y - 516) / 84 * 100) + '%' }));

  // time axis
  const times = $('.times');
  for (const [x, text, cls = ''] of c.times) add(times, cls, text, { left: px(x) });
  if (c.cross) add(times, 'cross', '2022/04/07(목) 10:05:00', { left: px(327), width: 136 / c.width * 100 + '%' });

  document.getElementById(c.side).append(root);
}
build(LEFT);
build(RIGHT);
```
